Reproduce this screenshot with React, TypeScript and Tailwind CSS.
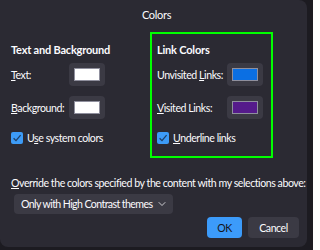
import { ChevronDown } from "lucide-react";

function Swatch({ color }: { color: string }) {
  return (
    <div className="flex h-[23px] w-[36px] shrink-0 items-center justify-center rounded-[4px] bg-[#3b3a44]">
      <div
        className="h-[13px] w-[26px] border border-[#8f8f9d]"
        style={{ backgroundColor: color }}
      />
    </div>
  );
}

function Checkbox() {
  return (
    <div className="flex h-[12px] w-[12px] shrink-0 items-center justify-center rounded-[2px] bg-[#3d9bf7]">
      <svg viewBox="0 0 12 12" className="h-[12px] w-[12px]">
        <path
          d="M2.6 6.2 L5 8.6 L9.6 3.2"
          fill="none"
          stroke="#1f3f66"
          strokeWidth="1.3"
        />
      </svg>
    </div>
  );
}

export default function App() {
  return (
    <div
      className="h-[250px] w-[313px] whitespace-nowrap bg-[#1c1b21] text-[10.6px] leading-[16px] tracking-[-0.45px] text-[#fbfbfe]"
      style={{ fontFamily: 'Lato, "Liberation Sans", sans-serif' }}
    >
      <div className="flex h-[247px] w-[307px] flex-col rounded-r-[8px] rounded-bl-[8px] bg-[#2b2a33]">
        <div className="flex h-[30px] items-center justify-center pl-[6px] text-[11px] tracking-[-0.3px]">
          Colors
        </div>

        <div className="mt-[2px] flex pl-[11px]">
          <div className="flex w-[139px] flex-col pt-[10px]">
            <div className="text-[11px] font-bold tracking-[-0.2px]">Text and Background</div>
            <div className="mt-[5px] flex items-center">
              <span className="w-[58px]">
                <u>T</u>ext:
              </span>
              <Swatch color="#ffffff" />
            </div>
            <div className="mt-[10px] flex items-center">
              <span className="w-[58px]">
                <u>B</u>ackground:
              </span>
              <Swatch color="#ffffff" />
            </div>
            <div className="mt-[11px] flex h-[16px] items-center gap-[4px]">
              <Checkbox />
              <span>
                U<u>s</u>e system colors
              </span>
            </div>
          </div>

          <div className="flex h-[126px] w-[123px] flex-col border-2 border-[#00ff00] pl-[5px] pt-[8px]">
            <div className="text-[11px] font-bold tracking-[-0.2px]">Link Colors</div>
            <div className="mt-[5px] flex items-center">
              <span className="w-[70px]">
                Unvisited <u>L</u>inks:
              </span>
              <Swatch color="#0b6fe3" />
            </div>
            <div className="mt-[10px] flex items-center">
              <span className="w-[70px]">
                <u>V</u>isited Links:
              </span>
              <Swatch color="#551a8b" />
            </div>
            <div className="mt-[11px] flex h-[16px] items-center gap-[4px]">
              <Checkbox />
              <span>
                <u>U</u>nderline links
              </span>
            </div>
          </div>
        </div>

        <div className="mt-[17px] pl-[11px]">
          <u>O</u>verride the colors specified by the content with my selections above:
        </div>
        <div className="ml-[14px] mt-[3px] flex h-[20px] w-[159px] items-center gap-[4px] rounded-[4px] bg-[#3b3a44] pl-[7px] pr-[8px]">
          <span className="tracking-[-0.6px]">Only with High Contrast themes</span>
          <ChevronDown className="h-[12px] w-[12px] shrink-0" strokeWidth={1.5} />
        </div>

        <div className="mr-[8px] mt-[3px] flex justify-end gap-[6px]">
          <div className="flex h-[21px] w-[35px] items-center justify-center rounded-[4px] bg-[#3c9bfa] text-[#15141a]">
            OK
          </div>
          <div className="flex h-[21px] w-[51px] items-center justify-center rounded-[4px] bg-[#3b3a44]">
            Cancel
          </div>
        </div>
      </div>
    </div>
  );
}
